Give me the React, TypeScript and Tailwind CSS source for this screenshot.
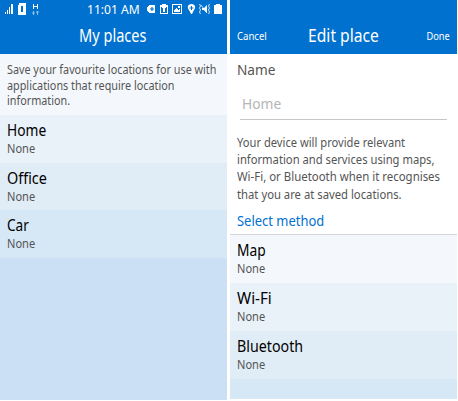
import React from "react";

type RowProps = { title: string; tone: string; titleFit: string };

function Row({ title, tone, titleFit }: RowProps) {
  return (
    <div className={`px-[7px] pt-[6px] whitespace-nowrap ${tone}`}>
      <div className={`h-[18px] w-max origin-left text-[16px] leading-[18px] text-black ${titleFit}`}>{title}</div>
      <div className="mt-[2px] h-4 w-max origin-left scale-x-[0.92] text-[12px] leading-4 text-[#555]">None</div>
    </div>
  );
}

function StatusIcons() {
  return (
    <svg className="h-[18px] w-[82px] shrink-0" viewBox="145 0 82 18" fill="#fff" shapeRendering="crispEdges">
      <path d="M149 5h6v8h-6v-1h-1v-1h-1V7h1V6h1z" />
      <path d="M150 9h4M152 7v4" stroke="#0071cf" strokeWidth="1.200" shapeRendering="auto" />
      <path d="M160 5h2V4h4v1h2v9h-8zM161 7v6h6V7z" fillRule="evenodd" />
      <path d="M162 7h4v1h-1v4h-2V8h-1z" />
      <path d="M172 4h10v10h-10zM173 5v8h8V5z" fillRule="evenodd" />
      <path d="M174 12v-2l2-2 2 2 1-1 1 1v2zM178 6h2v2h-2z" />
      <path d="M191.500 4c-4 0-4.500 4-2.500 6l2 4h1l2-4c2-2 1.500-6-2.500-6zM191 6v1.500h-1.500v1H191V10h1V8.500h1.500v-1H192V6z" fillRule="evenodd" shapeRendering="auto" />
      <path d="M202 8h2l3-3v8l-3-3h-2z" shapeRendering="auto" />
      <path d="M199.500 4l1 2-1 2 1 2-1 2 1 2M209.500 4l-1 2 1 2-1 2 1 2-1 2M201 5l6 8" fill="none" stroke="#fff" strokeWidth=".8" shapeRendering="auto" />
      <path d="M214 5h2V4h4v1h2v9h-8z" />
    </svg>
  );
}

function MyPlaces() {
  return (
    <section className="flex h-[400px] w-[227px] flex-col bg-[#cce0f5]">
      <header className="h-[54px] bg-[#0071cf] text-white">
        <div className="flex h-[18px] items-center">
          <svg className="h-[18px] w-[42px] shrink-0" viewBox="0 0 42 18" fill="#fff" shapeRendering="crispEdges">
            <path d="M5 12h1v2H5zM7 10h1v4H7zM9 7h1v7H9zM11 4h2v10h-2z" />
            <path d="M19 3h7v12h-8V5h1zM21 6v6h2V6z" fillRule="evenodd" />
            <path d="M33 4h1v2h3V4h1v5h-1V7h-3v2h-1z" />
            <path d="M32 13h3M33.500 11v4M36 12h3M37.500 11v4" stroke="#8bbfea" fill="none" shapeRendering="auto" />
          </svg>
          <span className="ml-[45px] w-[58px] origin-left scale-x-[0.93] whitespace-nowrap text-[13px] leading-[18px]">11:01 AM</span>
          <StatusIcons />
        </div>
        <h1 className="ml-[79px] h-9 w-max origin-left scale-x-[0.81] text-[18px] leading-[34px]">My places</h1>
      </header>
      <div className="h-[61px] bg-[#f4f8fc] px-[7px] pt-2 text-[12px] leading-[15.500px] whitespace-nowrap text-[#555]">
        <p className="w-max origin-left scale-x-[0.9]">Save your favourite locations for use with</p>
        <p className="w-max origin-left scale-x-[0.9]">applications that require location</p>
        <p className="w-max origin-left scale-x-[0.9]">information.</p>
      </div>
      <Row title="Home" tone="h-12 bg-[#e9f1f9]" titleFit="scale-x-[0.86]" />
      <Row title="Office" tone="h-[47px] bg-[#e0ecf6]" titleFit="scale-x-[0.9]" />
      <Row title="Car" tone="h-12 bg-[#d6e7f6]" titleFit="scale-x-[0.85]" />
    </section>
  );
}

function EditPlace() {
  return (
    <section className="flex h-[399px] w-[227px] flex-col bg-[#d6e7f6]">
      <header className="flex h-[54px] items-end bg-[#0071cf] pr-[7px] pl-[7px] text-white">
        <button className="h-9 w-[71px] origin-left scale-x-[0.87] text-left text-[11px] leading-9">Cancel</button>
        <h1 className="h-9 w-max origin-left scale-x-[0.87] text-[18px] leading-[34px]">Edit place</h1>
        <button className="ml-auto h-9 origin-right scale-x-[0.84] text-[11px] leading-9">Done</button>
      </header>
      <div className="h-[181px] border-b border-[#d2d5d8] bg-white px-[7px] pt-[5px] whitespace-nowrap">
        <label className="block h-[21px] w-max origin-left scale-x-[0.91] text-[15px] leading-5 text-[#555]">Name</label>
        <div className="mr-[3px] ml-[3px] h-10 border-b border-[#c6c6c6] pt-[13px] pl-[2px] text-[#b5b5b5]">
          <span className="block w-max origin-left scale-x-[0.92] text-[15px] leading-5">Home</span>
        </div>
        <div className="mt-[14px] h-[69px] text-[12px] leading-[17.200px] text-[#555]">
          <p className="w-max origin-left scale-x-[0.93]">Your device will provide relevant</p>
          <p className="w-max origin-left scale-x-[0.935]">information and services using maps,</p>
          <p className="w-max origin-left scale-x-[0.952]">Wi-Fi, or Bluetooth when it recognises</p>
          <p className="w-max origin-left scale-x-[0.94]">that you are at saved locations.</p>
        </div>
        <h2 className="mt-2 w-max origin-left scale-x-[0.925] text-[14px] leading-5 text-[#0071cf]">Select method</h2>
      </div>
      <Row title="Map" tone="h-12 bg-[#f4f8fc]" titleFit="scale-x-[0.86]" />
      <Row title="Wi-Fi" tone="h-12 bg-[#e9f1f9]" titleFit="scale-x-[0.95]" />
      <Row title="Bluetooth" tone="h-12 bg-[#e0ecf6]" titleFit="scale-x-[0.89]" />
    </section>
  );
}

export default function App() {
  return (
    <main className="flex h-[401px] w-[458px] gap-[3px] overflow-hidden bg-white font-['Noto_Sans',sans-serif]">
      <MyPlaces />
      <EditPlace />
    </main>
  );
}
